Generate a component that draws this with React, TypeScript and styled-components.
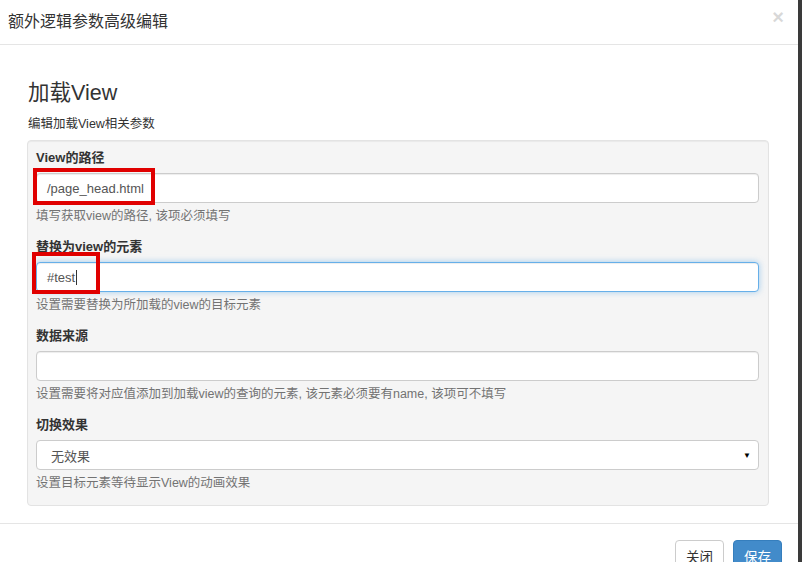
import * as React from 'react'
import styled, { createGlobalStyle, css } from 'styled-components'

const GlobalStyle = createGlobalStyle`
  html, body {
    margin: 0;
    padding: 0;
    height: 100%;
    overflow: hidden;
    background: #3a3a3a;
  }
  body {
    font-family: "Liberation Sans", Arial, "Noto Sans CJK SC", sans-serif;
    color: #333;
  }
`

const Modal = styled.div`
  width: 798px;
  height: 562px;
  background: #fff;
  display: flex;
  flex-direction: column;
`

const Header = styled.div`
  height: 45px;
  flex: none;
  display: flex;
  align-items: center;
  justify-content: space-between;
  padding: 0 14px 4px 8px;
  box-sizing: border-box;
  border-bottom: 1px solid #e5e5e5;
`

const Title = styled.h4`
  margin: 0;
  font-size: 16px;
  font-weight: normal;
  color: #333;
`

const Close = styled.span`
  font-size: 20px;
  font-weight: bold;
  color: #000;
  opacity: 0.15;
  line-height: 1;
  margin-top: -6px;
`

const Body = styled.div`
  padding: 36px 29px 17px 27px;
  border-bottom: 1px solid #e5e5e5;
`

const Heading = styled.h3`
  margin: 0 0 0 1px;
  font-size: 21.5px;
  line-height: 24px;
  font-weight: normal;
  color: #333;
`

const Lead = styled.p`
  margin: 9px 0 6px 1px;
  font-size: 12.5px;
  line-height: 20px;
  color: #333;
`

const Well = styled.div`
  background: #f5f5f5;
  border: 1px solid #e3e3e3;
  border-radius: 4px;
  box-shadow: inset 0 1px 1px rgba(0, 0, 0, 0.05);
  padding: 7px 9px 13px 8px;
  display: flex;
  flex-direction: column;
  gap: 12px;
`

const Group = styled.div`
  display: flex;
  flex-direction: column;
`

const Label = styled.label`
  font-size: 13px;
  font-weight: bold;
  line-height: 20px;
  margin-bottom: 5px;
  color: #333;
`

const FieldWrap = styled.div`
  position: relative;
`

const TextBox = styled.div<{ $focused?: boolean; $select?: boolean }>`
  height: 30px;
  box-sizing: border-box;
  border: 1px solid #ccc;
  border-radius: 4px;
  background: #fff;
  box-shadow: inset 0 1px 1px rgba(0, 0, 0, 0.075);
  padding: 0 10px;
  display: flex;
  align-items: center;
  font-size: 13px;
  color: #555;
  ${({ $focused }) =>
    $focused &&
    css`
      border-color: #66afe9;
      box-shadow: inset 0 1px 1px rgba(0, 0, 0, 0.075),
        0 0 6px rgba(102, 175, 233, 0.6);
    `}
  ${({ $select }) =>
    $select &&
    css`
      padding: 0 7px 0 14px;
      justify-content: space-between;
      box-shadow: none;
    `}
`

const Caret = styled.span`
  display: inline-block;
  width: 1px;
  height: 15px;
  background: #333;
  margin-left: 1px;
  vertical-align: -3px;
`

const Arrow = styled.span`
  font-size: 8px;
  color: #000;
`

const Highlight = styled.div<{ $top: number; $left: number; $w: number; $h: number }>`
  position: absolute;
  top: ${({ $top }) => $top}px;
  left: ${({ $left }) => $left}px;
  width: ${({ $w }) => $w}px;
  height: ${({ $h }) => $h}px;
  box-sizing: border-box;
  border: 4px solid #e00000;
  pointer-events: none;
`

const Help = styled.p`
  margin: 4px 0 0;
  font-size: 12.5px;
  line-height: 18px;
  color: #737373;
`

const Footer = styled.div`
  display: flex;
  justify-content: flex-end;
  gap: 9px;
  padding: 16px 16px 0;
`

const Button = styled.button<{ $primary?: boolean }>`
  height: 34px;
  padding: 0 10px 2px;
  border-radius: 4px;
  font-family: inherit;
  font-size: 13.5px;
  border: 1px solid #ccc;
  background: #fff;
  color: #333;
  ${({ $primary }) =>
    $primary &&
    css`
      background: #428bca;
      border-color: #357ebd;
      color: #fff;
    `}
`

type Field = {
  label: string
  value?: string
  help: string
  focused?: boolean
  select?: boolean
  mark?: { top: number; left: number; w: number; h: number }
}

const fields: Field[] = [
  {
    label: 'View的路径',
    value: '/page_head.html',
    help: '填写获取view的路径, 该项必须填写',
    mark: { top: -5, left: -3, w: 122, h: 37 },
  },
  {
    label: '替换为view的元素',
    value: '#test',
    focused: true,
    help: '设置需要替换为所加载的view的目标元素',
    mark: { top: -10, left: -4, w: 68, h: 42 },
  },
  {
    label: '数据来源',
    help: '设置需要将对应值添加到加载view的查询的元素, 该元素必须要有name, 该项可不填写',
  },
  {
    label: '切换效果',
    value: '无效果',
    select: true,
    help: '设置目标元素等待显示View的动画效果',
  },
]

export default function App() {
  return (
    <>
      <GlobalStyle />
      <Modal>
        <Header>
          <Title>额外逻辑参数高级编辑</Title>
          <Close>×</Close>
        </Header>
        <Body>
          <Heading>加载View</Heading>
          <Lead>编辑加载View相关参数</Lead>
          <Well>
            {fields.map((f) => (
              <Group key={f.label}>
                <Label>{f.label}</Label>
                <FieldWrap>
                  <TextBox $focused={f.focused} $select={f.select}>
                    <span>
                      {f.value}
                      {f.focused && <Caret />}
                    </span>
                    {f.select && <Arrow>▼</Arrow>}
                  </TextBox>
                  {f.mark && (
                    <Highlight
                      $top={f.mark.top}
                      $left={f.mark.left}
                      $w={f.mark.w}
                      $h={f.mark.h}
                    />
                  )}
                </FieldWrap>
                <Help>{f.help}</Help>
              </Group>
            ))}
          </Well>
        </Body>
        <Footer>
          <Button>关闭</Button>
          <Button $primary>保存</Button>
        </Footer>
      </Modal>
    </>
  )
}
